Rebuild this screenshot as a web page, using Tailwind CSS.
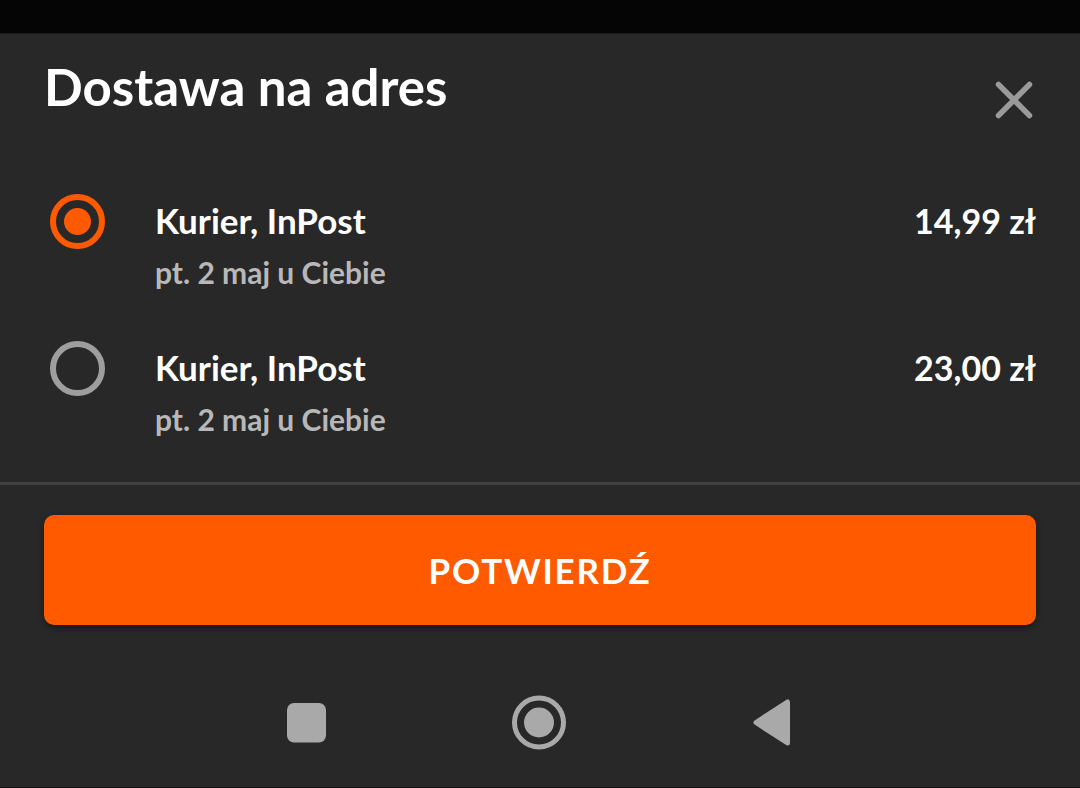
<!DOCTYPE html>
<html lang="pl">

<head>
    <meta charset="UTF-8" />
    <meta name="viewport" content="width=device-width, initial-scale=1.0" />
    <title>Dostawa na adres</title>
    <script src="https://cdn.jsdelivr.net/npm/@tailwindcss/browser@4"></script>
</head>

<body class="font-['Lato',sans-serif] text-white bg-[#050505] min-h-screen flex flex-col pt-[33px]">
    <main class="grow flex flex-col bg-[#282828] border-t border-[#1c1c1c]">
        <header class="flex justify-between items-start px-11 pt-[22px]">
            <h1 class="text-[51px] leading-[62px] font-bold">Dostawa na adres</h1>
            <button type="button" aria-label="Zamknij" class="mt-[22px] cursor-pointer">
                <svg class="w-11 h-11" viewBox="0 0 44 44" fill="none" stroke="#9a9a9a" stroke-width="5.500"
                    stroke-linecap="round">
                    <path d="M6.500 6.500 37.500 37.500M37.500 6.500 6.500 37.500" />
                </svg>
            </button>
        </header>

        <form class="flex flex-col">
            <div class="flex flex-col gap-[43px] pt-[72px] pb-[37px] px-11 border-b-3 border-[#404040]">
                <label class="flex items-start cursor-pointer">
                    <input type="radio" name="delivery" value="1" checked
                        class="appearance-none shrink-0 size-[55px] ml-1.5 mr-[50px] p-2 rounded-full border-6 border-[#9e9e9e] bg-clip-content checked:border-[#ff5a00] checked:bg-[#ff5a00]" />
                    <span class="grow">
                        <span class="block text-[35px] leading-[52px] font-bold">Kurier, InPost</span>
                        <span class="block text-[30px] leading-[52px] font-bold text-[#b8b8b8]">pt. 2 maj u Ciebie</span>
                    </span>
                    <span class="text-[34px] leading-[54px] font-bold">14,99 zł</span>
                </label>
                <label class="flex items-start cursor-pointer">
                    <input type="radio" name="delivery" value="2"
                        class="appearance-none shrink-0 size-[55px] ml-1.5 mr-[50px] p-2 rounded-full border-6 border-[#9e9e9e] bg-clip-content checked:border-[#ff5a00] checked:bg-[#ff5a00]" />
                    <span class="grow">
                        <span class="block text-[35px] leading-[52px] font-bold">Kurier, InPost</span>
                        <span class="block text-[30px] leading-[52px] font-bold text-[#b8b8b8]">pt. 2 maj u Ciebie</span>
                    </span>
                    <span class="text-[34px] leading-[54px] font-bold">23,00 zł</span>
                </label>
            </div>
            <div class="px-11 pt-[30px]">
                <button type="submit"
                    class="w-full h-[110px] rounded-[10px] bg-[#ff5a00] text-[35px] font-bold tracking-wider shadow-[0_3px_6px_rgba(0,0,0,0.4)] cursor-pointer">
                    POTWIERDŹ
                </button>
            </div>
        </form>

        <!-- system navigation -->
        <nav class="flex justify-center mt-auto pb-9 border-b border-[#111111]">
            <button type="button" aria-label="Ostatnie" class="w-[233px] flex justify-center">
                <svg class="size-[56px]" viewBox="0 0 56 56" fill="#a9a9a9">
                    <rect x="8" y="8" width="39" height="39.500" rx="7" />
                </svg>
            </button>
            <button type="button" aria-label="Ekran główny" class="w-[233px] flex justify-center">
                <svg class="size-[56px]" viewBox="0 0 56 56">
                    <circle cx="27" cy="27.500" r="24.500" fill="none" stroke="#a9a9a9" stroke-width="5" />
                    <circle cx="27" cy="27.500" r="15" fill="#a9a9a9" />
                </svg>
            </button>
            <button type="button" aria-label="Wstecz" class="w-[233px] flex justify-center">
                <svg class="size-[56px]" viewBox="0 0 56 56" fill="#a9a9a9" stroke="#a9a9a9" stroke-width="5"
                    stroke-linejoin="round">
                    <path d="M11 27.500 42.500 7V48Z" />
                </svg>
            </button>
        </nav>
    </main>
</body>

</html>
